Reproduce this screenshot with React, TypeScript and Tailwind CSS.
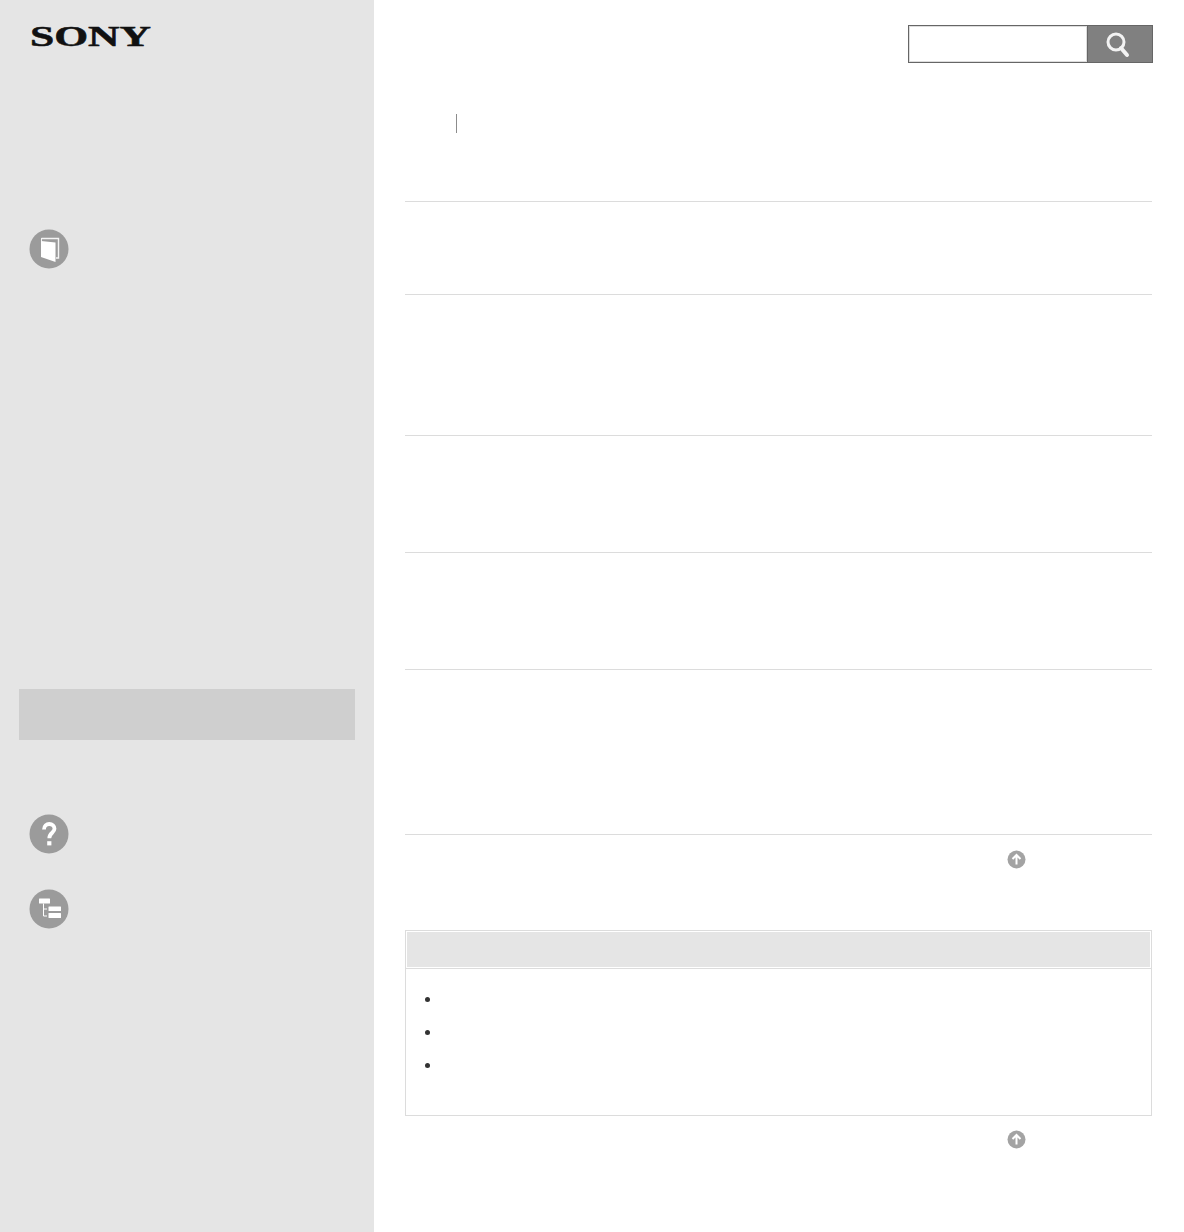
const Circle = ({ children }: { children: React.ReactNode }) => (
  <svg width="40" height="40" viewBox="0 0 40 40" className="block">
    <circle cx="20" cy="20" r="19.5" fill="#9b9b9b" />
    {children}
  </svg>
);

const UpArrow = () => (
  <svg width="20" height="20" viewBox="0 0 20 20" className="block">
    <circle cx="9.5" cy="9.5" r="9" fill="#a3a3a3" />
    <path d="M9.5 14.5V5.5M5.5 9L9.5 5L13.5 9" fill="none" stroke="#fff" strokeWidth="2" />
  </svg>
);

const Section = ({ className }: { className: string }) => (
  <div className={`border-b border-[#dcdcdc] ${className}`} />
);

export default function App() {
  return (
    <div className="flex h-[1232px] w-[1184px] bg-white overflow-hidden font-['Liberation_Sans',sans-serif]">
      <aside className="flex w-[374px] shrink-0 flex-col bg-[#e5e5e5]">
        <svg width="150" height="40" viewBox="0 0 150 40" className="mt-[16px] ml-[20px] block">
          <text
            x="10"
            y="30"
            fontFamily="'Liberation Serif', serif"
            fontWeight="700"
            fontSize="29"
            fill="#111111"
            stroke="#111111"
            strokeWidth="0.5"
            textLength="121"
            lengthAdjust="spacingAndGlyphs"
          >
            SONY
          </text>
        </svg>
        <div className="ml-[29px] mt-[173px]">
          <Circle>
            <path d="M12.5 9.5H29.5V29H27" fill="none" stroke="#f4f4f4" strokeWidth="1.4" />
            <path d="M12 9H13V12H12Z" fill="#f4f4f4" />
            <path d="M12 12L26.5 13.5V33L12 28Z" fill="#fff" />
          </Circle>
        </div>
        <div className="mx-[19px] mt-[420px] h-[51px] bg-[#cfcfcf]" />
        <div className="ml-[29px] mt-[74px]">
          <Circle>
            <path
              d="M15 15.5C15 12 17.6 10 20.2 10C23.4 10 25.5 12.2 25.5 14.8C25.5 18.8 20.3 18.8 20.3 24.2"
              fill="none"
              stroke="#fff"
              strokeWidth="3.8"
            />
            <rect x="18.2" y="27.2" width="4.2" height="4.2" fill="#fff" />
          </Circle>
        </div>
        <div className="ml-[29px] mt-[35px]">
          <Circle>
            <rect x="10" y="9.5" width="11" height="5" rx="0.5" fill="#fff" />
            <rect x="19.5" y="17.5" width="12.5" height="4.5" rx="0.5" fill="#fff" />
            <rect x="19.5" y="24" width="12.5" height="5" rx="0.5" fill="#fff" />
            <path d="M14.5 14.5V27H18M14.5 20H18" fill="none" stroke="#fff" strokeWidth="1" />
          </Circle>
        </div>
      </aside>

      <main className="flex flex-1 flex-col pl-[31px] pr-[32px]">
        <div className="mt-[25px] -mr-px flex h-[38px] w-[245px] self-end border border-[#666666]">
          <div className="flex-1 border border-[#dddddd] bg-white" />
          <div className="flex w-[65px] items-center justify-center border-l border-[#666666] bg-[#808080] pr-[4px]">
            <svg width="26" height="28" viewBox="0 0 26 28" className="block">
              <circle cx="11" cy="12" r="8" fill="none" stroke="#f2f2f2" strokeWidth="3" />
              <path d="M16 18L22 25" stroke="#f2f2f2" strokeWidth="4" strokeLinecap="round" />
            </svg>
          </div>
        </div>

        <div className="ml-[51px] mt-[51px] h-[19px] w-px bg-[#8c8c8c]" />

        <Section className="mt-[68px] h-0" />
        <Section className="h-[93px]" />
        <Section className="h-[141px]" />
        <Section className="h-[117px]" />
        <Section className="h-[117px]" />
        <Section className="h-[165px]" />

        <div className="mr-[125px] mt-[15px] self-end">
          <UpArrow />
        </div>

        <div className="mt-[60px] h-[186px] border border-[#dcdcdc]">
          <div className="border-b border-[#dcdcdc] p-px">
            <div className="h-[35px] bg-[#e5e5e5]" />
          </div>
          <ul className="ml-[19px] mt-[28px] flex flex-col gap-[28px]">
            <li className="h-[5px] w-[5px] rounded-full bg-[#333333]" />
            <li className="h-[5px] w-[5px] rounded-full bg-[#333333]" />
            <li className="h-[5px] w-[5px] rounded-full bg-[#333333]" />
          </ul>
        </div>

        <div className="mr-[125px] mt-[14px] self-end">
          <UpArrow />
        </div>
      </main>
    </div>
  );
}
